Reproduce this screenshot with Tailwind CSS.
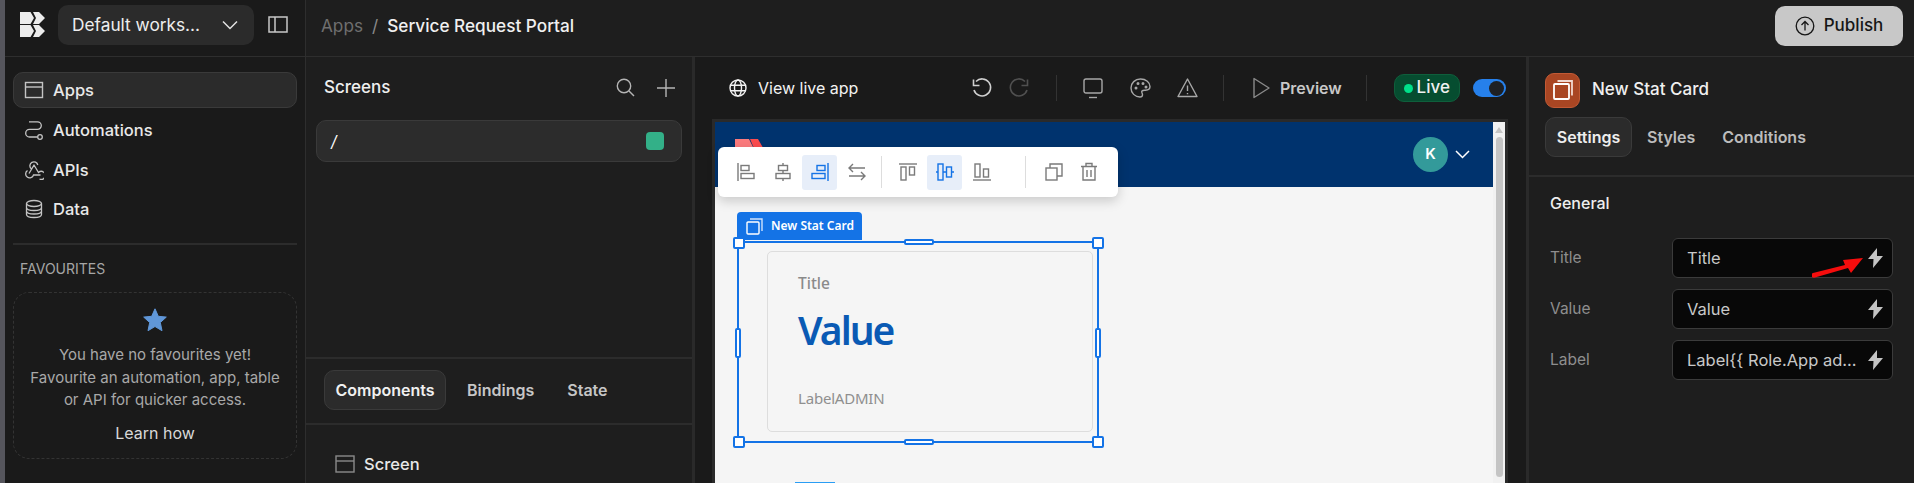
<!DOCTYPE html>
<html lang="en">
<head>
<meta charset="UTF-8">
<title>Service Request Portal</title>
<script src="https://cdn.jsdelivr.net/npm/@tailwindcss/browser@4"></script>
</head>
<body class="h-[483px] w-[1914px] overflow-hidden bg-[#1e1e1e] font-['Inter',sans-serif] text-white">
<div class="flex h-[483px] w-[1914px] overflow-hidden">
  <!-- window edge -->
  <div class="w-[5px] shrink-0 bg-[#55555c]"></div>

  <!-- left nav -->
  <aside class="flex h-full w-[301px] shrink-0 flex-col border-r border-[#2e2e2e] bg-[#1a1a1a]">
    <div class="flex h-[57px] shrink-0 items-center border-b border-[#2e2e2e] pb-[7px]">
      <svg class="ml-[15px] h-[25px] w-[25px]" viewBox="0 0 25 25" fill="#ececec"><path d="M0 0h10.500l3.500 6-3.500 6H0zM13 0h6l6 6-6 6h-6l3-6zM0 13h10.500l3.500 6-3.500 6H0zM13 13h6l6 6-6 6h-6l3-6z"/></svg>
      <button class="ml-[13px] flex h-[40px] w-[196px] items-center justify-between rounded-[10px] bg-[#2b2b2b] pl-[14px] pr-[15px] text-[17.300px] text-[#eeeeee]">
        <span>Default works...</span>
        <svg class="h-[18px] w-[18px]" viewBox="0 0 18 18" fill="none" stroke="#e4e4e4" stroke-width="1.500"><path d="M2 5.500l7 7 7-7"/></svg>
      </button>
      <svg class="ml-[14px] h-[20px] w-[20px]" viewBox="0 0 20 20" fill="none" stroke="#c8c8c8" stroke-width="1.500"><rect x="1" y="2" width="18" height="15"/><path d="M7 2v15"/></svg>
    </div>
    <nav class="px-[8px] pt-[15px] text-[16.500px] font-medium text-[#e8e8e8]">
      <a class="flex h-[36px] items-center gap-[9px] rounded-[10px] border border-[#3a3a3a] bg-[#2b2b2b] pl-[10px]">
        <svg class="h-[20px] w-[20px]" viewBox="0 0 20 20" fill="none" stroke="#c4c4c4" stroke-width="1.400"><rect x="1.500" y="2.500" width="17" height="15"/><path d="M1.500 7h17"/></svg>
        Apps
      </a>
      <a class="mt-[4px] flex h-[36px] items-center gap-[9px] pl-[11px]">
        <svg class="h-[20px] w-[20px]" viewBox="0 0 20 20" fill="none" stroke="#c4c4c4" stroke-width="1.300"><path d="M5 1.800h8.500a3.800 3.800 0 0 1 0 7.600H5.500a3.800 3.800 0 0 0 0 7.600H13.500"/><circle cx="16" cy="17" r="2.300"/></svg>
        Automations
      </a>
      <a class="mt-[4px] flex h-[36px] items-center gap-[9px] pl-[11px]">
        <svg class="h-[20px] w-[20px]" viewBox="0 0 20 20" fill="none" stroke="#c4c4c4" stroke-width="1.300"><path d="M7.200 8.800A4 4 0 1 1 13.800 5M3.500 10.500A4 4 0 1 0 9.500 15h7M10 5l4.500 7.500a4 4 0 1 1 1 6.500M10 4.500v.5L5 13.500"/></svg>
        APIs
      </a>
      <a class="mt-[3px] flex h-[36px] items-center gap-[9px] pl-[11px]">
        <svg class="h-[20px] w-[20px]" viewBox="0 0 20 20" fill="none" stroke="#c4c4c4" stroke-width="1.300"><ellipse cx="10" cy="4.500" rx="7.500" ry="3"/><path d="M2.500 4.500v11c0 1.700 3.400 3 7.500 3s7.500-1.300 7.500-3v-11M2.500 8.500c0 1.700 3.400 3 7.500 3s7.500-1.300 7.500-3M2.500 12c0 1.700 3.400 3 7.500 3s7.500-1.300 7.500-3"/></svg>
        Data
      </a>
    </nav>
    <div class="mx-[8px] mt-[16px] h-[2px] bg-[#2c2c2c]"></div>
    <div class="pl-[15px] pt-[15px] text-[14px] leading-[17px] text-[#a6a6a6]">FAVOURITES</div>
    <div class="mx-[8px] mt-[15px] flex h-[167px] flex-col items-center rounded-[16px] border border-dashed border-[#333333] pt-[15px] text-[15px] text-[#a8a8a8]">
      <svg class="h-[24px] w-[24px]" viewBox="0 0 24 24" fill="#6097d8"><path d="M12 .8l3.300 7.500 8 .8-6 5.400 1.700 8.200L12 18.500l-7 4.200 1.700-8.200-6-5.400 8-.8z" stroke="#6097d8" stroke-linejoin="round"/></svg>
      <p class="mt-[12px] text-center leading-[22.500px]">You have no favourites yet!<br>Favourite an automation, app, table<br>or API for quicker access.</p>
      <a class="mt-[10px] text-[16px] leading-[22px] text-[#d8d8d8]">Learn how</a>
    </div>
  </aside>

  <!-- right of nav -->
  <div class="flex min-w-0 flex-1 flex-col">
    <header class="flex h-[57px] shrink-0 items-center justify-between border-b border-[#2e2e2e] pb-[5px] pl-[15px] pr-[11px]">
      <div class="flex items-center text-[17.200px]">
        <span class="text-[#6f6f6f]">Apps</span>
        <span class="mx-[9px] text-[#8a8a8a]">/</span>
        <span class="font-medium text-[#f0f0f0]">Service Request Portal</span>
      </div>
      <button class="flex h-[40px] w-[128px] items-center justify-center gap-[9px] rounded-[10px] bg-[#c8c8c8] text-[17px] font-medium text-[#161616]">
        <svg class="h-[20px] w-[20px]" viewBox="0 0 20 20" fill="none" stroke="#161616" stroke-width="1.300"><circle cx="10" cy="10" r="8.800"/><path d="M10 14.500v-9M6.500 9L10 5.500 13.500 9"/></svg>
        Publish
      </button>
    </header>

    <div class="flex min-h-0 flex-1">
      <!-- screens panel -->
      <section class="flex w-[389px] shrink-0 flex-col border-r-[3px] border-[#2a2a2a]">
        <div class="flex h-[62px] shrink-0 items-center justify-between pb-[1px] pl-[18px] pr-[14px] text-[17px] font-medium text-[#efefef]">
          Screens
          <div class="flex items-center gap-[22px] pr-[3px]">
            <svg class="h-[19px] w-[19px]" viewBox="0 0 19 19" fill="none" stroke="#b5b5b5" stroke-width="1.400"><circle cx="8" cy="8" r="6.700"/><path d="M13 13l5 5"/></svg>
            <svg class="h-[18px] w-[18px]" viewBox="0 0 18 18" fill="none" stroke="#b5b5b5" stroke-width="1.400"><path d="M9 0v18M0 9h18"/></svg>
          </div>
        </div>
        <div class="mx-[10px] mt-[1px] flex h-[42px] shrink-0 items-center justify-between rounded-[10px] border border-[#3a3a3a] bg-[#2c2c2c] pl-[14px] pr-[17px] text-[16px] italic">
          /
          <span class="h-[18px] w-[18px] rounded-[4px] bg-[#33b088]"></span>
        </div>
        <div class="mt-[195px] h-[2px] shrink-0 bg-[#2c2c2c]"></div>
        <div class="flex h-[64px] shrink-0 items-center pb-[2px] pl-[18px] text-[16px] font-semibold text-[#c6c6c6]">
          <span class="flex h-[40px] w-[122px] items-center justify-center rounded-[10px] border border-[#3a3a3a] bg-[#2b2b2b] text-[#f0f0f0]">Components</span>
          <span class="ml-[21px]">Bindings</span>
          <span class="ml-[33px]">State</span>
        </div>
        <div class="h-[2px] shrink-0 bg-[#2c2c2c]"></div>
        <div class="flex items-center gap-[9px] pl-[29px] pt-[27px] text-[16.500px] font-medium text-[#e8e8e8]">
          <svg class="h-[20px] w-[20px]" viewBox="0 0 20 20" fill="none" stroke="#8a8a8a" stroke-width="1.400"><rect x="1" y="2" width="18" height="16"/><path d="M1 7h18"/></svg>
          Screen
        </div>
      </section>

      <!-- canvas -->
      <main class="flex w-[834px] shrink-0 flex-col border-r-[3px] border-[#2a2a2a] bg-[#1a1a1a]">
        <div class="flex h-[62px] shrink-0 items-center pl-[34px]">
          <svg class="h-[18px] w-[18px]" viewBox="0 0 18 18" fill="none" stroke="#f2f2f2" stroke-width="1.400"><circle cx="9" cy="9" r="8"/><ellipse cx="9" cy="9" rx="3.500" ry="8"/><path d="M1.500 6.300h15M1.500 11.700h15"/></svg>
          <span class="ml-[11px] w-[213px] text-[16px] text-[#f2f2f2]">View live app</span>
          <svg class="h-[22px] w-[22px]" viewBox="0 0 22 22" fill="none" stroke="#d0d0d0" stroke-width="1.600"><path d="M5 4.500A8.500 8.500 0 1 1 3 13"/><path d="M2.500 2.500v6h6"/></svg>
          <svg class="ml-[15px] h-[22px] w-[22px]" viewBox="0 0 22 22" fill="none" stroke="#505050" stroke-width="1.600"><path d="M17 4.500A8.500 8.500 0 1 0 19 13"/><path d="M19.500 2.500v6h-6"/></svg>
          <span class="ml-[26px] h-[26px] w-px bg-[#333333]"></span>
          <svg class="ml-[26px] h-[22px] w-[20px]" viewBox="0 0 20 22" fill="none" stroke="#a8a8a8" stroke-width="1.400"><rect x="1" y="2" width="18" height="14" rx="2"/><path d="M6 20.500h8"/></svg>
          <svg class="ml-[27px] h-[22px] w-[21px]" viewBox="0 0 21 22" fill="none" stroke="#a8a8a8" stroke-width="1.400"><path d="M10.500 2C5 2 1 6 1 11s4 9 9 9c1.500 0 2.500-1 2.500-2.200 0-1.800-1.500-2.300-.5-3.800.8-1 2-.8 3.500-.8 2.500 0 4.500-1.200 4.500-3.700C20 5.500 16 2 10.500 2z"/><circle cx="6" cy="11" r=".8"/><circle cx="8" cy="6.500" r=".8"/><circle cx="13" cy="6.500" r=".8"/><circle cx="16" cy="10" r=".8"/></svg>
          <svg class="ml-[26px] h-[22px] w-[21px]" viewBox="0 0 21 22" fill="none" stroke="#a8a8a8" stroke-width="1.400"><path d="M10.500 2L1 19.500h19z" stroke-linejoin="round"/><path d="M10.500 8.500v5.500M10.500 16v1.200"/></svg>
          <span class="ml-[25px] h-[26px] w-px bg-[#333333]"></span>
          <svg class="ml-[29px] h-[22px] w-[17px]" viewBox="0 0 17 22" fill="none" stroke="#8a8a8a" stroke-width="1.400"><path d="M1 1.500v19L16 11z" stroke-linejoin="round"/></svg>
          <span class="ml-[10px] text-[16px] font-semibold text-[#c8c8c8]">Preview</span>
          <span class="ml-[24px] h-[26px] w-px bg-[#333333]"></span>
          <span class="ml-[27px] flex h-[28px] w-[66px] items-center justify-center gap-[4px] rounded-[10px] border border-[#0f5f3c] bg-[#064d30] text-[17px] font-medium text-[#f0f0f0]">
            <span class="h-[9px] w-[9px] rounded-full bg-[#00e08a]"></span>Live
          </span>
          <span class="ml-[13px] flex h-[18px] w-[33px] items-center justify-end rounded-full bg-[#2680eb] pr-[2px]">
            <span class="h-[15px] w-[15px] rounded-full bg-[#1e2024]"></span>
          </span>
        </div>

        <!-- app preview -->
        <div class="mx-[17px] flex h-[364px] w-[796px] shrink-0 border-[3px] border-b-0 border-[#2a2a2a]">
          <div class="relative min-w-0 flex-1 bg-[#f5f5f5]">
            <div class="flex h-[65px] items-center justify-end bg-[#00336e] pr-[23px]">
              <span class="flex h-[35px] w-[35px] items-center justify-center rounded-full bg-[#339a9a] text-[15px] font-semibold text-white">K</span>
              <svg class="ml-[7px] h-[15px] w-[15px]" viewBox="0 0 15 15" fill="none" stroke="#ffffff" stroke-width="1.500"><path d="M1 4l6.500 6.500L14 4"/></svg>
            </div>

            <!-- app logo, mostly behind the toolbar -->
            <svg class="absolute left-[20px] top-[17px] h-[14px] w-[31px]" viewBox="0 0 31 14"><path d="M0 0h14l7 14H0z" fill="#fb7b7d"/><path d="M15 0h8l8 14H21z" fill="#fb4b4e"/></svg>

            <!-- alignment toolbar -->
            <div class="absolute left-[3px] top-[25px] flex h-[50px] w-[400px] items-center rounded-[6px] bg-white pl-[10px] shadow-[0_4px_12px_rgba(0,0,0,0.18)]">
              <span class="flex h-[35px] w-[35px] items-center justify-center">
                <svg class="h-[20px] w-[20px]" viewBox="0 0 20 20" fill="none" stroke="#7a7a7a" stroke-width="1.400"><path d="M2 1v18"/><rect x="5" y="3.500" width="8" height="5"/><rect x="5" y="11.500" width="13" height="5"/></svg>
              </span>
              <span class="ml-[2px] flex h-[35px] w-[35px] items-center justify-center">
                <svg class="h-[20px] w-[20px]" viewBox="0 0 20 20" fill="none" stroke="#7a7a7a" stroke-width="1.400"><path d="M10 1v2.500M10 8.500v3M10 16.500V19"/><rect x="5.500" y="3.500" width="9" height="5"/><rect x="3" y="11.500" width="14" height="5"/></svg>
              </span>
              <span class="ml-[2px] flex h-[35px] w-[35px] items-center justify-center rounded-[3px] bg-[#e7eef9]">
                <svg class="h-[20px] w-[20px]" viewBox="0 0 20 20" fill="none" stroke="#1473e6" stroke-width="1.400"><path d="M18 1v18"/><rect x="7" y="3.500" width="8" height="5"/><rect x="2" y="11.500" width="13" height="5"/></svg>
              </span>
              <span class="ml-[2px] flex h-[35px] w-[35px] items-center justify-center">
                <svg class="h-[20px] w-[20px]" viewBox="0 0 20 20" fill="none" stroke="#7a7a7a" stroke-width="1.400"><path d="M18 6H2M6 2L2 6l4 4M2 14h16M14 10l4 4-4 4"/></svg>
              </span>
              <span class="ml-[7px] h-[32px] w-px bg-[#dddddd]"></span>
              <span class="ml-[8px] flex h-[35px] w-[35px] items-center justify-center">
                <svg class="h-[20px] w-[20px]" viewBox="0 0 20 20" fill="none" stroke="#7a7a7a" stroke-width="1.400"><path d="M1 2h18"/><rect x="3" y="5" width="5" height="13"/><rect x="11.500" y="5" width="5" height="8"/></svg>
              </span>
              <span class="ml-[2px] flex h-[35px] w-[35px] items-center justify-center rounded-[3px] bg-[#e7eef9]">
                <svg class="h-[20px] w-[20px]" viewBox="0 0 20 20" fill="none" stroke="#1473e6" stroke-width="1.400"><path d="M1 10h2M8 10h3.500M16.500 10H19"/><rect x="3" y="2" width="5" height="16"/><rect x="11.500" y="5" width="5" height="10"/></svg>
              </span>
              <span class="ml-[2px] flex h-[35px] w-[35px] items-center justify-center">
                <svg class="h-[20px] w-[20px]" viewBox="0 0 20 20" fill="none" stroke="#7a7a7a" stroke-width="1.400"><path d="M1 18h18"/><rect x="3" y="2" width="5" height="13"/><rect x="11.500" y="7" width="5" height="8"/></svg>
              </span>
              <span class="ml-[26px] h-[32px] w-px bg-[#dddddd]"></span>
              <span class="ml-[10px] flex h-[35px] w-[35px] items-center justify-center">
                <svg class="h-[20px] w-[20px]" viewBox="0 0 20 20" fill="none" stroke="#7a7a7a" stroke-width="1.400"><rect x="2" y="6" width="11" height="12"/><path d="M6 6V2h12v12h-5"/></svg>
              </span>
              <span class="flex h-[35px] w-[35px] items-center justify-center">
                <svg class="h-[20px] w-[20px]" viewBox="0 0 20 20" fill="none" stroke="#7a7a7a" stroke-width="1.400"><path d="M2 4.500h16M4 4.500v13.500h12V4.500M7 4.500V1.500h6v3M8 8v7M12 8v7"/></svg>
              </span>
            </div>

            <!-- selected component -->
            <div class="absolute left-[22px] top-[90px] flex h-[28px] w-[125px] items-center rounded-t-[4px] bg-[#1473e6] pl-[9px] font-['Noto_Sans',sans-serif] text-[12px] font-semibold text-white">
              <svg class="h-[17px] w-[17px]" viewBox="0 0 17 17" fill="none" stroke="#ffffff" stroke-width="1.400"><rect x="1" y="4" width="12" height="12" rx="1"/><path d="M4 1h12v12" stroke="#cfe2fb"/></svg>
              <span class="ml-[8px]">New Stat Card</span>
            </div>
            <div class="absolute left-[22px] top-[119px] h-[202px] w-[362px] border-2 border-[#1473e6] pl-[28px] pt-[8px] font-['Noto_Sans',sans-serif]">
              <div class="flex h-[181px] w-[326px] flex-col rounded-[5px] border border-[#dddddd] pl-[30px] pt-[20px]">
                <span class="text-[15.500px] font-medium leading-[22px] text-[#8a8a8a]">Title</span>
                <span class="mt-[10px] text-[39px] font-semibold leading-[52px] tracking-[-2px] text-[#0a5ab4]">Value</span>
                <span class="mt-[29px] pt-[2px] text-[15px] leading-[22px] tracking-[-0.200px] text-[#8f8f8f]">LabelADMIN</span>
              </div>
              <span class="absolute -left-[6px] -top-[6px] h-[12px] w-[12px] rounded-[2px] border-2 border-[#1473e6] bg-white"></span>
              <span class="absolute -right-[7px] -top-[6px] h-[12px] w-[12px] rounded-[2px] border-2 border-[#1473e6] bg-white"></span>
              <span class="absolute -bottom-[7px] -left-[6px] h-[12px] w-[12px] rounded-[2px] border-2 border-[#1473e6] bg-white"></span>
              <span class="absolute -bottom-[7px] -right-[7px] h-[12px] w-[12px] rounded-[2px] border-2 border-[#1473e6] bg-white"></span>
              <span class="absolute -top-[4px] left-[165px] h-[6px] w-[30px] rounded-[2px] border-2 border-[#1473e6] bg-white"></span>
              <span class="absolute -bottom-[4px] left-[165px] h-[6px] w-[30px] rounded-[2px] border-2 border-[#1473e6] bg-white"></span>
              <span class="absolute -left-[4px] top-[85px] h-[30px] w-[6px] rounded-[2px] border-2 border-[#1473e6] bg-white"></span>
              <span class="absolute -right-[4px] top-[85px] h-[30px] w-[6px] rounded-[2px] border-2 border-[#1473e6] bg-white"></span>
            </div>
            <div class="absolute left-[80px] top-[360px] h-px w-[40px] bg-[#2a9df4]"></div>
          </div>
          <!-- preview scrollbar -->
          <div class="flex w-[12px] shrink-0 flex-col items-center bg-[#f1f1f1]">
            <span class="mt-[5px] h-0 w-0 border-x-[4px] border-b-[6px] border-x-transparent border-b-[#c4c4c4]"></span>
            <span class="mt-[4px] h-[340px] w-[7px] rounded-full bg-[#c4c4c4]"></span>
          </div>
        </div>
      </main>

      <!-- settings panel -->
      <section class="flex min-w-0 flex-1 flex-col">
        <div class="flex h-[60px] shrink-0 items-center pl-[16px] pt-[6px]">
          <span class="flex h-[35px] w-[35px] items-center justify-center rounded-[9px] border border-[#c25a35] bg-[#a94623]">
            <svg class="h-[22px] w-[22px]" viewBox="0 0 22 22" fill="none" stroke="#ffffff" stroke-width="1.800"><rect x="2" y="5" width="15" height="15" rx="1"/><path d="M5.500 2H20v14.500" stroke="#f0d8cf"/></svg>
          </span>
          <span class="ml-[12px] text-[17px] font-medium text-[#f0f0f0]">New Stat Card</span>
        </div>
        <div class="flex h-[58px] shrink-0 items-start pl-[16px] text-[16px] font-semibold text-[#bcbcbc]">
          <span class="flex h-[40px] w-[87px] items-center justify-center rounded-[10px] border border-[#3a3a3a] bg-[#2b2b2b] text-[#eeeeee]">Settings</span>
          <span class="ml-[15px] flex h-[40px] items-center">Styles</span>
          <span class="ml-[27px] flex h-[40px] items-center">Conditions</span>
        </div>
        <div class="h-[2px] shrink-0 bg-[#2c2c2c]"></div>
        <div class="pl-[21px] pt-[16px] text-[16px] font-medium leading-[20px] text-[#eeeeee]">General</div>
        <div class="relative mt-[25px] flex flex-col gap-[11px] pl-[21px] pr-[21px] text-[15.500px] text-[#8e8e8e]">
          <div class="flex h-[40px] items-center justify-between">
            Title
            <div class="flex h-[40px] w-[221px] items-center justify-between rounded-[6px] border border-[#3b3b3b] bg-[#080808] pl-[14px] pr-[9px] text-[16.500px] text-[#c8c8c8]">
              Title
              <svg class="h-[20px] w-[15px] shrink-0" viewBox="0 0 15 20" fill="#c4c4c4"><path d="M9 0L0 11h5.500L5 20l10-12H9z"/></svg>
            </div>
          </div>
          <div class="flex h-[40px] items-center justify-between">
            Value
            <div class="flex h-[40px] w-[221px] items-center justify-between rounded-[6px] border border-[#3b3b3b] bg-[#080808] pl-[14px] pr-[9px] text-[16.500px] text-[#c8c8c8]">
              Value
              <svg class="h-[20px] w-[15px] shrink-0" viewBox="0 0 15 20" fill="#c4c4c4"><path d="M9 0L0 11h5.500L5 20l10-12H9z"/></svg>
            </div>
          </div>
          <div class="flex h-[40px] items-center justify-between">
            Label
            <div class="flex h-[40px] w-[221px] items-center justify-between rounded-[6px] border border-[#3b3b3b] bg-[#080808] pl-[14px] pr-[9px] text-[16.500px] whitespace-nowrap text-[#c8c8c8]">
              Label{{ Role.App ad...
              <svg class="h-[20px] w-[15px] shrink-0" viewBox="0 0 15 20" fill="#c4c4c4"><path d="M9 0L0 11h5.500L5 20l10-12H9z"/></svg>
            </div>
          </div>
          <!-- red annotation arrow -->
          <svg class="absolute left-[283px] top-[18px] h-[22px] w-[54px]" viewBox="0 0 54 22" fill="#f50d0d"><path d="M1 17l32-8-2-5 20-2-12 15-3-5L3 21.500a2.300 2.300 0 0 1-2-4.500z"/></svg>
        </div>
      </section>
    </div>
  </div>
</div>
</body>
</html>
